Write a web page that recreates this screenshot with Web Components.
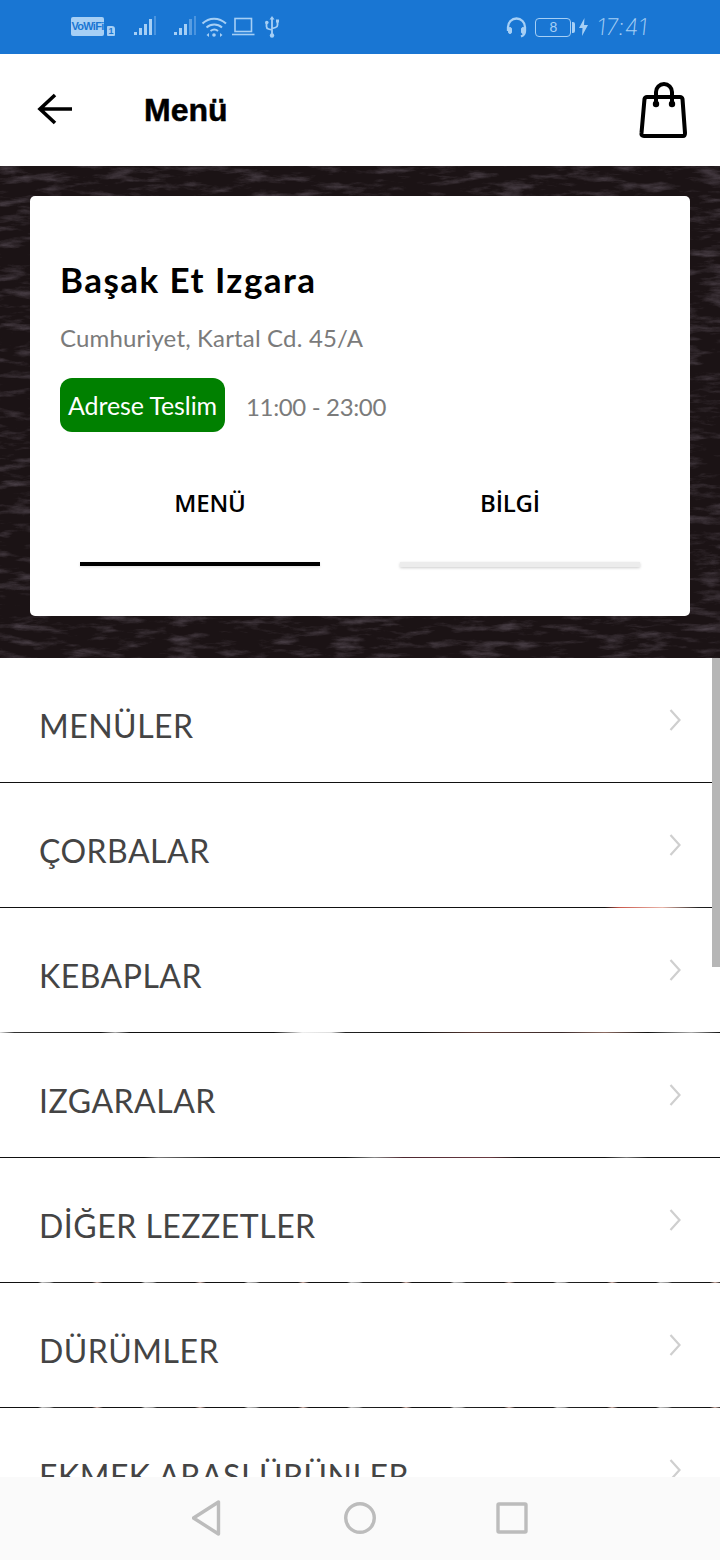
<!DOCTYPE html>
<html lang="tr">
<head>
<meta charset="utf-8">
<title>Menü</title>
<style>
  html, body { margin: 0; padding: 0; height: 100%; background: #fff; }
  body { font-family: Lato, "Open Sans", sans-serif; overflow: hidden; }
</style>
</head>
<body>
<app-shell>
  <status-bar></status-bar>
  <top-bar title="Menü"></top-bar>
  <hero-panel>
    <shop-card name="Başak Et Izgara" address="Cumhuriyet, Kartal Cd. 45/A" badge="Adrese Teslim" hours="11:00 - 23:00">
      <tab-strip></tab-strip>
    </shop-card>
  </hero-panel>
  <menu-list>
    <menu-row label="MENÜLER" line="a"></menu-row>
    <menu-row label="ÇORBALAR" line="b"></menu-row>
    <menu-row label="KEBAPLAR" line="c"></menu-row>
    <menu-row label="IZGARALAR" line="d"></menu-row>
    <menu-row label="DİĞER LEZZETLER" line="e"></menu-row>
    <menu-row label="DÜRÜMLER" line="e"></menu-row>
    <menu-row label="EKMEK ARASI ÜRÜNLER" line="a"></menu-row>
  </menu-list>
  <nav-bar></nav-bar>
</app-shell>

<script>
class AppShell extends HTMLElement {
  constructor() {
    super();
    const shadowRoot = this.attachShadow({ mode: 'open' });
    shadowRoot.innerHTML = `
      <style>
        :host { display: flex; flex-direction: column; width: 720px; height: 1560px; overflow: hidden; }
      </style>
      <slot></slot>
    `;
  }
}

class StatusBar extends HTMLElement {
  constructor() {
    super();
    const shadowRoot = this.attachShadow({ mode: 'open' });
    shadowRoot.innerHTML = `
      <style>
        :host { display: flex; align-items: center; flex: none; height: 54px; background: #1976d3; color: #a6cff5; padding: 0 72px 0 71px; box-sizing: border-box; }
        svg { display: block; flex: none; }
        .vowifi { width: 33px; height: 19px; margin-top: -1px; border-radius: 2px; background: #a6cff5; color: #1976d3; font: 700 11px/19px "Liberation Sans", sans-serif; letter-spacing: -.7px; text-align: center; flex: none; }
        .sim { width: 8px; height: 10px; margin: 8px 0 0 3px; border-radius: 1px 3px 1px 1px; background: #a6cff5; color: #1976d3; font: 700 9px/10px "Liberation Sans", sans-serif; text-align: center; flex: none; }
        .push { flex: 1; }
        .battery { width: 36px; height: 19px; box-sizing: border-box; border: 1.3px solid #a6cff5; border-radius: 4px; margin-left: 9px; font: 400 14px/16px "Liberation Sans", sans-serif; text-align: center; flex: none; }
        .nub { width: 3px; height: 11px; margin-left: 1px; background: #a6cff5; border-radius: 0 2px 2px 0; flex: none; }
        .time { margin: 0 0 0 9px; font: 200 23px/1 Inter, sans-serif; letter-spacing: .2px; transform: skewX(-6deg); white-space: nowrap; flex: none; }
      </style>
      <span class="vowifi">VoWiFi</span>
      <span class="sim">1</span>
      <svg width="22" height="22" viewBox="0 0 22 22" style="margin-left:19px" fill="#a6cff5">
        <rect x="0" y="16" width="3" height="3"/><rect x="5" y="12" width="3" height="7"/><rect x="10" y="8" width="3" height="11"/><rect x="15" y="3" width="3" height="16"/><rect x="20" y="0" width="2" height="19" opacity=".35"/>
      </svg>
      <svg width="22" height="22" viewBox="0 0 22 22" style="margin-left:18px" fill="#a6cff5">
        <rect x="0" y="16" width="3" height="3"/><rect x="5" y="12" width="3" height="7"/><rect x="10" y="8" width="3" height="11"/><rect x="15" y="3" width="3" height="16" opacity=".45"/><rect x="20" y="0" width="2" height="19" opacity=".35"/>
      </svg>
      <svg width="27" height="22" viewBox="0 0 27 22" style="margin-left:5px" fill="none" stroke="#a6cff5" stroke-width="2">
        <path d="M1.500 7.500C8 1 18 1 25 7.500"/><path d="M5.500 11.500C10 7.500 16.500 7.500 21 11.500"/><path d="M9.500 15C12 13.200 14.800 13.200 17 15"/>
        <circle cx="13" cy="19" r="1.800" fill="#a6cff5" stroke="none"/><path d="M8 17l-2.500 2 2.500 2zM19 17l2.500 2-2.500 2z" fill="#a6cff5" stroke="none"/>
      </svg>
      <svg width="23" height="20" viewBox="0 0 23 20" style="margin-left:4px" fill="none" stroke="#a6cff5" stroke-width="1.600">
        <rect x="3" y="1.500" width="16.500" height="13"/><path d="M0 17.500h22.500"/>
      </svg>
      <svg width="14" height="22" viewBox="0 0 14 22" style="margin-left:10px" fill="none" stroke="#a6cff5" stroke-width="1.800">
        <path d="M7 3v16M1.500 7v3.500q0 2 2 2.500l3.500 1M12.500 6v3q0 2-2 2.500L7 12.500"/>
        <path d="M7 0l2.500 3.500h-5z" fill="#a6cff5" stroke="none"/><circle cx="7" cy="19.500" r="2.200" fill="#a6cff5" stroke="none"/><circle cx="1.800" cy="6.500" r="1.800" fill="#a6cff5" stroke="none"/><rect x="11" y="3.500" width="3" height="3" fill="#a6cff5" stroke="none"/>
      </svg>
      <span class="push"></span>
      <svg width="21" height="21" viewBox="0 0 21 21" style="margin-right:-1px" fill="none" stroke="#a6cff5" stroke-width="2.300">
        <path d="M2 14V10a8.500 8.500 0 0 1 17 0v4q0 4-4 5.500"/>
        <rect x="2.500" y="10.500" width="3" height="6" rx="1.500" fill="#a6cff5" stroke-width="1"/><rect x="15.500" y="10.500" width="3" height="6" rx="1.500" fill="#a6cff5" stroke-width="1"/>
      </svg>
      <span class="battery">8</span>
      <span class="nub"></span>
      <svg width="9" height="18" viewBox="0 0 9 18" style="margin-left:4px" fill="#a6cff5"><path d="M5.500 0L0 10h3.500L3 18l6-11H5z"/></svg>
      <span class="time">17:41</span>
    `;
  }
}

class TopBar extends HTMLElement {
  constructor() {
    super();
    const shadowRoot = this.attachShadow({ mode: 'open' });
    shadowRoot.innerHTML = `
      <style>
        :host { display: flex; align-items: center; flex: none; height: 112px; background: #fff; padding: 0 33px 0 37px; box-sizing: border-box; }
        svg { display: block; flex: none; }
        h1 { flex: 1; margin: 0 0 0 71px; font: 700 32px/1 "Liberation Sans", sans-serif; -webkit-text-stroke: .5px #000; color: #000; }
      </style>
      <svg width="36" height="34" viewBox="0 0 36 34" fill="none" stroke="#000" stroke-width="3.600"><path d="M35 16H3M18 2L3 16l15 14"/></svg>
      <h1></h1>
      <svg width="48" height="58" viewBox="0 0 48 58" fill="none" stroke="#000" stroke-width="4" stroke-linejoin="round">
        <path d="M8 16H41Q43 16 43.500 18L46 52Q46 55 44 55H5Q2 55 2.500 52L5.500 18Q6 16 8 16Z"/>
        <path d="M17 23V11a8 8 0 0 1 16 0V23"/>
        <circle cx="17" cy="23" r="3.200" fill="#000" stroke="none"/><circle cx="33" cy="23" r="3.200" fill="#000" stroke="none"/>
      </svg>
    `;
    shadowRoot.querySelector('h1').textContent = this.getAttribute('title');
  }
}

class HeroPanel extends HTMLElement {
  constructor() {
    super();
    const shadowRoot = this.attachShadow({ mode: 'open' });
    shadowRoot.innerHTML = `
      <style>
        :host { display: block; flex: none; position: relative; height: 492px; padding: 30px 30px 42px; box-sizing: border-box; background: #1b1315; overflow: hidden; }
        svg { position: absolute; left: 0; top: 0; }
        ::slotted(*) { position: relative; }
      </style>
      <svg width="720" height="492">
        <filter id="chalk" x="0" y="0" width="100%" height="100%">
          <feTurbulence type="fractalNoise" baseFrequency=".03 .12" numOctaves="6" seed="11"/>
          <feColorMatrix values="0 0 0 0 .34  0 0 0 0 .28  0 0 0 0 .36  .9 0 0 0 -.44"/>
        </filter>
        <rect width="720" height="492" filter="url(#chalk)"/>
      </svg>
      <slot></slot>
    `;
  }
}

class ShopCard extends HTMLElement {
  constructor() {
    super();
    const shadowRoot = this.attachShadow({ mode: 'open' });
    shadowRoot.innerHTML = `
      <style>
        :host { display: block; height: 420px; background: #fff; border-radius: 5px; padding: 60px 30px 0; box-sizing: border-box; }
        h2 { margin: 0; font: 700 35px/46px Lato, sans-serif; letter-spacing: 1.450px; color: #000; }
        .address { margin: 20px 0 0; font: 400 24px/32px Lato, sans-serif; letter-spacing: .17px; color: #7b7b7b; }
        .info { display: flex; align-items: center; margin-top: 24px; }
        .badge { display: block; width: 165px; height: 54px; border-radius: 12px; background: #008000; color: #fff; font: 400 25px/54px Lato, sans-serif; letter-spacing: -.1px; text-align: center; white-space: nowrap; }
        .hours { margin: 4px 0 0 21px; font: 400 24px/32px Lato, sans-serif; letter-spacing: -.35px; color: #7b7b7b; }
      </style>
      <h2></h2>
      <p class="address"></p>
      <div class="info"><span class="badge"></span><span class="hours"></span></div>
      <slot></slot>
    `;
    shadowRoot.querySelector('h2').textContent = this.getAttribute('name');
    shadowRoot.querySelector('.address').textContent = this.getAttribute('address');
    shadowRoot.querySelector('.badge').textContent = this.getAttribute('badge');
    shadowRoot.querySelector('.hours').textContent = this.getAttribute('hours');
  }
}

class TabStrip extends HTMLElement {
  constructor() {
    super();
    const shadowRoot = this.attachShadow({ mode: 'open' });
    shadowRoot.innerHTML = `
      <style>
        :host { display: block; margin: 55px -30px 0; }
        .labels { display: grid; grid-template-columns: 300px 300px; padding-left: 30px; }
        .labels span { font: 600 24px/32px "Open Sans", sans-serif; letter-spacing: -.2px; color: #000; text-align: center; }
        .bars { display: flex; gap: 80px; align-items: center; height: 6px; margin-top: 42px; padding: 0 50px; }
        .bars i { display: block; width: 240px; height: 4px; background: #000; box-shadow: 0 1px 3px rgba(0,0,0,.12); }
        .bars i.off { height: 5px; background: #ececec; box-shadow: 0 1px 3px rgba(0,0,0,.2); }
      </style>
      <div class="labels"><span>MENÜ</span><span>BİLGİ</span></div>
      <div class="bars"><i></i><i class="off"></i></div>
    `;
  }
}

class MenuList extends HTMLElement {
  constructor() {
    super();
    const shadowRoot = this.attachShadow({ mode: 'open' });
    shadowRoot.innerHTML = `
      <style>
        :host { display: block; flex: 1; min-height: 0; position: relative; overflow: hidden; background: #fff; }
        .thumb { position: absolute; right: 0; top: 0; width: 8px; height: 309px; background: #b6b6b6; }
      </style>
      <slot></slot>
      <div class="thumb"></div>
    `;
  }
}

const LINE_STYLES = {
  a: 'linear-gradient(90deg,#111,#111)',
  b: 'linear-gradient(90deg,#111 0,#111 84%,#c9574a 86%,#e9b5a9 92%,#222 97%,#111 100%)',
  c: 'linear-gradient(90deg,#ddd 0,#333 2%,#111 14%,#aaa 16%,#111 18%,#111 38%,#eee 42%,#ddd 46%,#222 48%,#111 58%,#5a3a34 66%,#3a2a2a 78%,#8c6c62 84%,#111 90%,#aaa 96%,#111 100%)',
  d: 'linear-gradient(90deg,#111 0,#111 20%,#777 22%,#111 30%,#111 48%,#888 52%,#4d2730 56%,#6b3b42 68%,#111 72%,#111 84%,#777 87%,#111 90%)',
  e: 'repeating-linear-gradient(90deg,#111 0,#111 38px,#bbb 42px,#888 50px,#222 54px,#111 92px,#c9a9a0 97px,#111 103px)'
};

class MenuRow extends HTMLElement {
  constructor() {
    super();
    const shadowRoot = this.attachShadow({ mode: 'open' });
    shadowRoot.innerHTML = `
      <style>
        :host { display: flex; align-items: center; justify-content: space-between; height: 125px; box-sizing: border-box; padding: 0 39px 0 39px; position: relative; }
        span { font: 400 32px/1 Lato, sans-serif; letter-spacing: .5px; color: #444; margin-top: 10px; white-space: nowrap; }
        svg { display: block; flex: none; margin-top: -2px; }
        .line { position: absolute; left: 0; right: 0; bottom: 0; height: 1px; }
      </style>
      <span></span>
      <svg width="12" height="22" viewBox="0 0 12 22" fill="none" stroke="#cfcfcf" stroke-width="2.200"><path d="M1.500 1L10.500 11L1.500 21"/></svg>
      <div class="line"></div>
    `;
    shadowRoot.querySelector('span').textContent = this.getAttribute('label');
    shadowRoot.querySelector('.line').style.background = LINE_STYLES[this.getAttribute('line')];
  }
}

class NavBar extends HTMLElement {
  constructor() {
    super();
    const shadowRoot = this.attachShadow({ mode: 'open' });
    shadowRoot.innerHTML = `
      <style>
        :host { display: flex; align-items: center; justify-content: center; gap: 120px; flex: none; height: 83px; background: #fafafa; position: relative; padding-bottom: 2px; box-sizing: border-box; }
        svg { display: block; flex: none; }
      </style>
      <svg width="32" height="36" viewBox="0 0 32 36" fill="none" stroke="#bcbcbc" stroke-width="3.400" stroke-linejoin="round"><path d="M26.500 2V34L1.500 18Z"/></svg>
      <svg width="32" height="32" viewBox="0 0 32 32" fill="none" stroke="#bcbcbc" stroke-width="3.400"><circle cx="16" cy="16" r="14.300"/></svg>
      <svg width="32" height="32" viewBox="0 0 32 32" fill="none" stroke="#bcbcbc" stroke-width="3.400" stroke-linejoin="round"><rect x="2" y="2" width="28" height="28" rx="1"/></svg>
    `;
  }
}

customElements.define('app-shell', AppShell);
customElements.define('status-bar', StatusBar);
customElements.define('top-bar', TopBar);
customElements.define('hero-panel', HeroPanel);
customElements.define('shop-card', ShopCard);
customElements.define('tab-strip', TabStrip);
customElements.define('menu-list', MenuList);
customElements.define('menu-row', MenuRow);
customElements.define('nav-bar', NavBar);
</script>
</body>
</html>
